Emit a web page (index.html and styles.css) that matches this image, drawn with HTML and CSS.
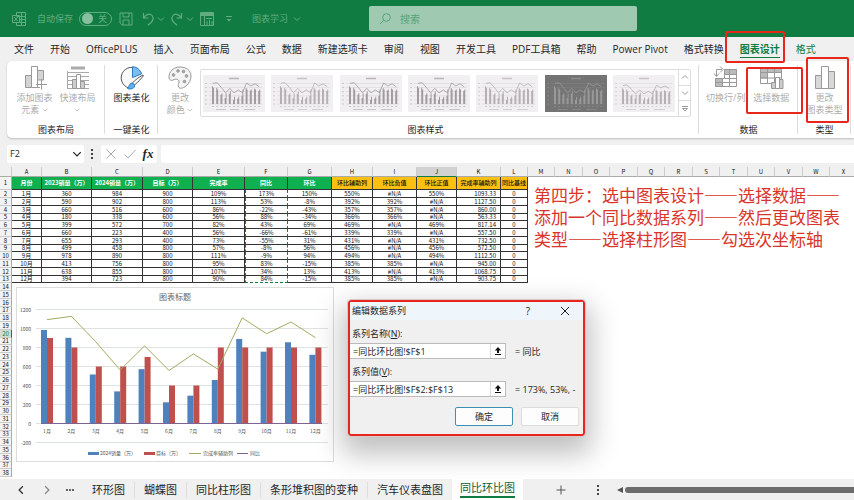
FILE: index.html
```html
<!DOCTYPE html>
<html lang="zh-CN">
<head>
<meta charset="utf-8">
<title>图表学习</title>
<link rel="stylesheet" href="styles.css">
</head>
<body>
<svg class="defs" aria-hidden="true">
  <symbol id="chev" viewBox="0 0 8 8"><path d="M1 2.5 4 5.5 7 2.5" fill="none" stroke="currentColor"/></symbol>
  <symbol id="pick" viewBox="0 0 10 10"><path d="M5 1 1.8 4.4H4V7H6V4.4H8.2ZM2 8H8V9H2Z" fill="currentColor"/></symbol>
</svg>

<header class="titlebar">
  <svg class="ic14 excel" viewBox="0 0 14 14"><g fill="none" stroke="currentColor"><path d="M4.5 3.5V.5H13.5V13.5H4.5V10.500M9.500 .5V13.5M4.5 4.500H13.500M8 7.500H13.500M8 10.500H13.500"/><path d="M.5 3.500H7.500V10.500H.5ZM2.300 5 5.700 9M5.700 5 2.300 9"/></g></svg>
  <span class="autosave">自动保存</span>
  <button class="toggle" aria-label="自动保存"><i></i>关</button>
  <button class="tool save" aria-label="保存"><svg class="ic14" viewBox="0 0 14 14"><path d="M1 1H13V13H3L1 11ZM4 1V5H10V1M4 13V8H10V13" fill="none" stroke="currentColor"/></svg></button>
  <button class="tool undo" aria-label="撤销"><svg class="ic14" viewBox="0 0 14 14"><path d="M2.500 1V6H7.500M2.500 6C5 2 9 1 11 3.500 13 6 12 8.500 10 10.500L7 13.300" fill="none" stroke="currentColor" stroke-width="1.200"/></svg><svg class="ic8"><use href="#chev"/></svg></button>
  <button class="tool redo" aria-label="恢复"><svg class="ic14" viewBox="0 0 14 14"><path d="M11.500 1V6H6.500M11.500 6C9 2 5 1 3 3.500 1 6 2 8.500 4 10.500L7 13.300" fill="none" stroke="currentColor" stroke-width="1.200"/></svg><svg class="ic8"><use href="#chev"/></svg></button>
  <button class="tool grid" aria-label="表格"><svg class="ic14" viewBox="0 0 14 14"><path d="M.5 .5H13.500V13.500H.5ZM.5 3.500H13.500M4.500 3.500V13.500M6 6.500H12M7 9V13M9.500 8V13M12 9V13" fill="none" stroke="currentColor"/><path d="M1 1H13V3H1Z" fill="currentColor"/></svg></button>
  <button class="tool more" aria-label="自定义"><svg class="ic8" viewBox="0 0 8 8"><path d="M1 1.500H7" stroke="currentColor"/><path d="M1.500 4H6.500L4 6.500Z" fill="currentColor"/></svg></button>
  <button class="doc">图表学习<svg class="ic8"><use href="#chev"/></svg></button>
  <label class="search"><svg class="ic12" viewBox="0 0 12 12"><circle cx="7.500" cy="4.500" r="3.800" fill="none" stroke="currentColor"/><path d="M4.800 7.200 1 11" stroke="currentColor"/></svg><input type="text" placeholder="搜索" aria-label="搜索"></label>
</header>

<nav class="tabs">
  <a href="#">文件</a><a href="#">开始</a><a href="#">OfficePLUS</a><a href="#">插入</a><a href="#">页面布局</a><a href="#">公式</a><a href="#">数据</a><a href="#">新建选项卡</a><a href="#">审阅</a><a href="#">视图</a><a href="#">开发工具</a><a href="#">PDF工具箱</a><a href="#">帮助</a><a href="#">Power Pivot</a><a href="#">格式转换</a><a href="#" class="current marked">图表设计</a><a href="#" class="context">格式</a>
</nav>

<section class="ribbon">
  <div class="group">
    <div class="items">
      <button class="cmd"><svg class="ic24" viewBox="0 0 24 24"><g fill="#d4d4d4" stroke="#999"><path d="M2.500 9.500H8.500V21.500H2.500Z"/><path d="M14.500 4.500H20.500V14H14.500Z"/><path fill="#fff" d="M8.500 .5H14.500V21.500H8.500Z"/><path fill="none" d="M14.500 21.500H17M18.500 13V23.500M13 18.500H24"/></g></svg><span>添加图表<br>元素 <svg class="ic6"><use href="#chev"/></svg></span></button>
      <button class="cmd"><svg class="ic24" viewBox="0 0 24 24"><path d="M5 .5H19V3.500H5Z" fill="#aaa"/><path d="M1.500 5V22.500M1 6.500H23M1 10.500H23M1 14.500H23M1 18.500H23M1 22.500H23" stroke="#aaa" fill="none"/><g fill="#ccc" stroke="#999"><path d="M6.500 13.500H10.500V22.500H6.500ZM14.500 15.500H18.500V22.500H14.500Z"/><path fill="#fff" d="M10.500 8.500H14.500V22.500H10.500Z"/></g></svg><span>快速布局<br><svg class="ic6"><use href="#chev"/></svg></span></button>
    </div>
    <h2>图表布局</h2>
  </div>
  <div class="group single">
    <div class="items">
      <button class="cmd on"><svg class="ic24" viewBox="0 0 24 24"><path d="M21 7A10.500 10.500 0 1 0 9 22" fill="#fafafa" stroke="#555"/><path d="M12.500 .8V11.500L21.500 8C20.500 4 17 .8 12.500 .8Z" fill="#7cbcf0" stroke="#2b7cc4"/><path d="M23 9C19 11 15 14 12.500 17L14.500 19C18 16 22 12 23.500 9.500Z" fill="#fff" stroke="#555"/><path d="M12 17C9.500 17 9.500 20 7.500 22.500 11 24 15.500 22 14.500 19Z" fill="#5fb0ee" stroke="#2b7cc4"/></svg><span>图表美化</span></button>
    </div>
    <h2>一键美化</h2>
  </div>
  <div class="group styles">
    <div class="items">
      <button class="cmd narrow"><svg class="ic24" viewBox="0 0 24 24"><path d="M12 1C5 1 1 6 1 11 1 14 3 15 5 14 8 12.500 11 13 11 16 11 18 9.500 19 10.500 21 11.500 23 15 22.500 18 20 21 17.500 23 14 23 10 23 4 17.500 1 12 1Z" fill="#f4f4f4" stroke="#999"/><g fill="#aaa" stroke="#888" stroke-width=".6"><circle cx="5.500" cy="9" r="1.400"/><circle cx="10" cy="5" r="1.400"/><circle cx="15.500" cy="5.500" r="1.400"/><circle cx="18.500" cy="10" r="1.400"/><circle cx="16.500" cy="15.500" r="1.400"/></g></svg><span>更改<br>颜色 <svg class="ic6"><use href="#chev"/></svg></span></button>
      <div class="gallery">
        <div class="thumbs" id="thumbs"></div>
        <div class="scroller"><button aria-label="上"><svg class="ic8 flip"><use href="#chev"/></svg></button><button aria-label="下"><svg class="ic8"><use href="#chev"/></svg></button><button aria-label="更多"><svg class="ic8" viewBox="0 0 8 8"><path d="M1 1.500H7M1.500 3.500H6.500L4 6Z" fill="none" stroke="currentColor"/></svg></button></div>
      </div>
    </div>
    <h2>图表样式</h2>
  </div>
  <div class="group data">
    <div class="items">
      <button class="cmd"><svg class="ic24" viewBox="0 0 24 24"><g fill="#fff" stroke="#999"><path d="M10.500 3.500H22.500V20.500H1.500V12.500H10.500Z"/><path fill="#bbb" d="M10.500 3.500H22.500V8.500H10.500ZM1.500 12.500H8.500V20.500H1.500Z"/><path fill="none" d="M1.500 16.500H22.500M8.500 12.500V20.500M15.500 3.500V20.500M10.500 12.500H22.500"/><path fill="none" d="M2.500 10V3.500H8M6 .5 9 3.500 6 6.500M0 7.500 2.500 10.500 5 7.500"/></g></svg><span>切换行/列</span></button>
      <button class="cmd marked"><svg class="ic24" viewBox="0 0 24 24"><g fill="#fff" stroke="#999"><path d="M1.500 1.500H22.500V17.500H1.500Z"/><path fill="#bbb" d="M1.500 1.500H22.500V6.500H1.500ZM1.500 6.500H8.500V12H1.500Z"/><path fill="none" d="M1.500 12H22.500M8.500 1.500V17.500M15.500 1.500V17.500"/><path fill="#ccc" d="M12.500 16.500H16.500V22.500H12.500ZM20.500 13.500H24V22.500H20.500Z"/><path d="M16.500 11.500H20.500V22.500H16.500Z"/></g></svg><span>选择数据</span></button>
    </div>
    <h2>数据</h2>
  </div>
  <div class="group single">
    <div class="items">
      <button class="cmd marked"><svg class="ic24" viewBox="0 0 24 24"><g stroke="#999"><path fill="#d8d8d8" d="M2.500 9.500H8.500V22.500H2.500ZM15.500 5.500H21.500V22.500H15.500Z"/><path fill="#fff" d="M8.500 .5H15.500V22.500H8.500Z"/></g></svg><span>更改<br>图表类型</span></button>
    </div>
    <h2>类型</h2>
  </div>
</section>

<div class="formula">
  <label class="namebox"><input type="text" value="F2" aria-label="名称框"><svg class="ic10"><use href="#chev"/></svg></label>
  <span class="dots"><i></i><i></i><i></i></span>
  <div class="fx">
    <button aria-label="取消输入"><svg class="ic12" viewBox="0 0 12 12"><path d="M1.500 1.500 10.500 10.500M10.500 1.500 1.500 10.500" stroke="#aaa"/></svg></button>
    <button aria-label="输入"><svg class="ic12" viewBox="0 0 12 12"><path d="M.5 6.500 4 10 11.500 2" fill="none" stroke="#aaa"/></svg></button>
    <button class="fn" aria-label="插入函数">fx</button>
  </div>
  <input class="expr" type="text" aria-label="编辑栏">
</div>

<main class="sheet">
  <table class="cells">
    <colgroup id="cols"></colgroup>
    <thead><tr id="letters"></tr></thead>
    <tbody id="rows"></tbody>
  </table>

  <figure class="chart"><svg id="chart" viewBox="0 0 316 173"></svg></figure>

  <p class="note">第四步：选中图表设计——选择数据——<br>添加一个同比数据系列——然后更改图表<br>类型——选择柱形图——勾选次坐标轴</p>

  <form class="dialog" role="dialog" aria-label="编辑数据系列">
    <div class="caption"><span>编辑数据系列</span><button type="button">?</button><button type="button" aria-label="关闭"><svg class="ic8" viewBox="0 0 8 8"><path d="M0 0 8 8M8 0 0 8" stroke="#222"/></svg></button></div>
    <div class="fields">
      <label for="sname">系列名称(<u>N</u>):</label>
      <div class="line"><div class="ref"><input id="sname" type="text" value="=同比环比图!$F$1"><button type="button" aria-label="选择区域"><svg class="ic10"><use href="#pick"/></svg></button></div><output>= 同比</output></div>
      <label for="svals">系列值(<u>V</u>):</label>
      <div class="line"><div class="ref"><input id="svals" type="text" value="=同比环比图!$F$2:$F$13"><button type="button" aria-label="选择区域"><svg class="ic10"><use href="#pick"/></svg></button></div><output>= 173%, 53%, -</output></div>
    </div>
    <div class="actions"><button type="button" class="primary">确定</button><button type="button">取消</button></div>
  </form>
</main>

<footer class="sheetbar">
  <button class="nav" aria-label="上一个"><svg class="ic10 left"><use href="#chev"/></svg></button>
  <button class="nav dim" aria-label="下一个"><svg class="ic10 right"><use href="#chev"/></svg></button>
  <button class="nav all" aria-label="全部"><i></i><i></i><i></i></button>
  <a href="#">环形图</a><a href="#">蝴蝶图</a><a href="#">同比柱形图</a><a href="#">条形堆积图的变种</a><a href="#">汽车仪表盘图</a><a href="#" class="current"><span>同比环比图</span></a>
  <button class="add" aria-label="新建工作表"><svg class="ic10" viewBox="0 0 10 10"><path d="M5 .5V9.500M.5 5H9.500" stroke="#555"/></svg></button>
  <span class="dots"><i></i><i></i><i></i></span>
  <svg class="ic6 arrow" viewBox="0 0 6 6"><path d="M6 0V6L0 3Z" fill="#555"/></svg>
  <div class="scrollbar"></div>
</footer>
<script src="app.js"></script>
</body>
</html>
```
FILE: styles.css
```css
* { box-sizing: border-box; }
body {
  margin: 0; height: 100vh; overflow: hidden;
  display: flex; flex-direction: column;
  background: #f0f0f0; color: #262626;
  font: 9px/12px "Open Sans", "Noto Sans CJK SC", sans-serif;
}
button, input { font: inherit; color: inherit; border: 0; background: none; padding: 0; margin: 0; min-width: 0; }
a { color: inherit; text-decoration: none; }
svg { display: block; flex: none; overflow: visible; }
.defs { position: absolute; width: 0; height: 0; }
.ic6 { width: 6px; height: 6px; }
.ic8 { width: 8px; height: 8px; }
.ic10 { width: 10px; height: 10px; }
.ic12 { width: 12px; height: 12px; }
.ic14 { width: 14px; height: 14px; }
.ic24 { width: 24px; height: 24px; }
.flip { transform: rotate(180deg); }
.left { transform: rotate(90deg); }
.right { transform: rotate(-90deg); }

.titlebar { flex: none; height: 37px; display: flex; align-items: center; padding-left: 12px; background: #107c41; color: #62ac82; }
.autosave { margin: 0 6px 0 11px; }
.toggle { width: 33px; height: 14px; border: 1px solid #62ac82; border-radius: 7px; display: flex; align-items: center; gap: 5px; padding-left: 2px; }
.toggle i { width: 11px; height: 11px; border-radius: 50%; background: #86c09f; }
.tool { display: flex; align-items: center; gap: 2px; }
.save { margin-left: 7px; }
.undo { margin-left: 8px; }
.redo { margin-left: 5px; }
.grid { margin-left: 6px; }
.more { margin-left: 11px; }
.doc { display: flex; align-items: center; gap: 5px; margin-left: 19px; }
.search { display: flex; align-items: center; gap: 9px; width: 268px; height: 25px; margin-left: 68px; padding-left: 10px; border-radius: 2px; background: #a0c9b2; color: #56a378; }
.search input { flex: 1; font-size: 10px; }
.search input::placeholder { color: #56a378; opacity: 1; }

.tabs { flex: none; height: 24px; max-width: 816px; padding-left: 14px; display: flex; justify-content: space-between; align-items: center; font-size: 10px; line-height: 16px; white-space: nowrap; }
.tabs .current { color: #107c41; font-weight: bold; border-bottom: 1px solid #107c41; }
.tabs .context { color: #107c41; }

.marked { position: relative; }
.marked::after { content: ""; position: absolute; z-index: 2; border: 2px solid #e8261c; border-radius: 2px; pointer-events: none; }
.tabs .marked::after { inset: -10px -5px -6px -15px; }
.data .marked::after { inset: 1px -9px 2px -3px; }
.single .marked::after { inset: -9px 2px -7px 8px; }

.ribbon { flex: none; height: 77px; margin-left: 7px; display: flex; background: #fff; border-radius: 5px 0 0 5px; box-shadow: 0 1px 2px #bbb; }
.group { position: relative; display: flex; flex-direction: column; justify-content: space-between; width: 98px; padding: 5px 6px 2px; }
.group::before { content: ""; position: absolute; right: 0; top: 4px; bottom: 4px; border-right: 1px solid #ddd; }
.group.single { width: 53px; padding-left: 0; padding-right: 0; }
.group.styles { flex: 1; padding-left: 2px; padding-right: 8px; }
.group.data { width: 99px; padding-left: 4px; padding-right: 4px; }
.group:last-child { margin-right: 3px; }
.group h2 { margin: 0; font-size: 9px; font-weight: normal; line-height: 12px; text-align: center; }
.items { display: flex; justify-content: center; align-items: flex-start; }
.cmd { flex: 1; display: flex; flex-direction: column; align-items: center; gap: 2px; height: 50px; color: #acacac; white-space: nowrap; }
.cmd.narrow { flex: none; width: 40px; }
.cmd span svg { display: inline-block; }
.cmd.on { color: #262626; }
.gallery { flex: 1; min-width: 0; height: 48px; margin-top: 3px; display: flex; border: 1px solid #ddd; border-radius: 2px; }
.thumbs { flex: 1; display: flex; justify-content: space-between; align-items: center; padding: 0 3px 0 2px; }
.thumb { width: 62px; height: 37px; background: #f2eff2; color: #a09ca0; }
.thumb.pale { color: #b4b0b4; }
.thumb.dark { background: #747474; color: #999; }
.scroller { width: 12px; display: flex; flex-direction: column; border-left: 1px solid #ddd; color: #999; }
.scroller button { flex: 1; display: grid; place-items: center; }
.scroller button + button { border-top: 1px solid #ddd; }

.formula { flex: none; height: 18px; margin: 7px 0 4px 7px; display: flex; }
.namebox { width: 77px; padding: 0 2px 0 3px; display: flex; align-items: center; background: #fff; border-radius: 2px; }
.namebox input { flex: 1; }
.dots { display: flex; flex-direction: column; justify-content: center; gap: 2px; width: 2px; margin: 0 8px 0 7px; }
.dots i { width: 2px; height: 2px; background: #444; }
.fx { width: 56px; margin-right: 4px; display: flex; align-items: center; justify-content: space-around; background: #fff; border-radius: 2px; }
.fn { font: italic bold 13px/16px "Liberation Serif", serif; }
.expr { flex: 1; background: #fff; border-radius: 2px 0 0 2px; }

.sheet { position: relative; flex: 1; min-height: 0; overflow: hidden; background: #fff; }
.cells { width: 100%; table-layout: fixed; border-spacing: 0; font: 6px/6px "Noto Sans CJK SC", sans-serif; text-align: center; color: #111; }
.cells th, .cells td { padding: 0; white-space: nowrap; }
.cells thead th { height: 10px; background: #f0f0f0; border-right: 1px solid #ccc; border-bottom: 1px solid #aaa; font-weight: normal; }
.cells thead .sel { background: #d2d2d2; border-bottom-color: #107c41; }
.cells tbody tr { height: 8px; }
.cells tbody tr:nth-child(4n+1) { height: 7px; }
.cells tbody tr:first-child { height: 13px; }
.cells tbody th { background: #f3f3f3; border-right: 1px solid #aaa; border-bottom: 1px solid #ccc; font-weight: normal; }
.cells tbody .sel { background: #d0ddd5; color: #107c41; border-right-color: #107c41; }
.cells .v { border-right: 1px solid #333; border-bottom: 1px solid #333; }
.cells .num { text-align: right; padding-right: 4px; }
.cells .green { background: #0fb050; color: #fff; font-weight: bold; }
.cells .amber { background: #fdc010; font-weight: 500; }
.cells .ants { border-right: 1px dashed #107c41; border-left: 1px dashed #107c41; }
.cells .ants.last { border-bottom: 1px dashed #107c41; }
.c12 { width: 12px; } .c27 { width: 27px; } .c28 { width: 28px; } .c30 { width: 30px; } .c40 { width: 40px; } .c41 { width: 41px; }
.c43 { width: 43px; } .c44 { width: 44px; } .c50 { width: 50px; } .c51 { width: 51px; } .c52 { width: 52px; }

.chart { position: absolute; left: 16px; top: 120px; width: 318px; margin: 0; border: 1px solid #ddd; background: #fff; }
.chart text { font: 5px "Noto Sans CJK SC", sans-serif; fill: #555; }
.chart .title { font-size: 8px; fill: #666; }
.note { position: absolute; left: 534px; top: 17px; margin: 0; font-size: 17px; line-height: 22px; color: #d9362b; white-space: nowrap; font-family: "Noto Sans CJK SC", sans-serif; }

.dialog { position: absolute; left: 348px; top: 133px; width: 237px; background: #f0f0f0; border: 2px solid #e8261c; border-radius: 3px; outline: 1px solid #d8c8c8; box-shadow: 0 12px 28px 6px rgba(0,0,0,.25); }
.caption { height: 18px; display: flex; align-items: center; padding: 0 14px 0 2px; background: #eef5fb; }
.caption span { flex: 1; }
.caption button { margin-left: 31px; font-size: 10px; }
.fields { display: flex; flex-direction: column; padding-top: 6px; line-height: 15px; }
.fields label { padding-left: 2px; }
.line { display: flex; align-items: center; gap: 9px; margin: 2px 0 5px; white-space: nowrap; overflow: hidden; }
.ref { flex: none; width: 156px; height: 16px; display: flex; background: #fff; border: 1px solid #bbb; border-left: 0; }
.ref input { flex: 1; padding-left: 3px; }
.ref button { width: 15px; display: grid; place-items: center; border-left: 1px solid #ddd; color: #111; }
.actions { display: flex; justify-content: flex-end; gap: 8px; padding: 5px 4px 8px; }
.actions button { width: 58px; height: 19px; background: #fdfdfd; border: 1px solid #ddd; border-radius: 2px; }
.actions .primary { border-color: #3f8fb5; }

.sheetbar { flex: none; height: 21px; display: flex; align-items: center; font-size: 11px; line-height: 16px; white-space: nowrap; padding-left: 16px; }
.nav { margin-right: 16px; color: #333; }
.nav.dim { color: #888; }
.nav.all { display: flex; gap: 1px; margin-right: 9px; margin-left: -2px; }
.nav.all i { width: 2px; height: 2px; border-radius: 50%; background: #333; }
.sheetbar a { padding: 0 9px; border-right: 1px solid #ddd; }
.sheetbar a:nth-of-type(5) { border-right: 0; }
.sheetbar .current { align-self: stretch; padding: 0 8px; background: #fff; border: 0; }
.sheetbar .current span { display: block; line-height: 18px; border-bottom: 2px solid #107c41; height: 19px; color: #0c5c31; }
.add { margin: 0 24px 0 33px; }
.arrow { margin: 0 2px 0 10px; }
.scrollbar { flex: 1; height: 6px; border-radius: 3px 0 0 3px; background: #6d6d6d; }
```
FILE: app.js
```js
const head = ['月份', '2023销量（万）', '2024销量（万）', '目标（万）', '完成率', '同比', '环比', '环比辅助列', '环比负值', '环比正值', '完成率辅助列', '同比基线'];
const data = [
  ['1月', 360, 984, 900, '109%', '173%', '150%', '550%', '#N/A', '550%', '1093.33', 0],
  ['2月', 590, 902, 800, '113%', '53%', '-8%', '392%', '392%', '#N/A', '1127.50', 0],
  ['3月', 660, 516, 600, '86%', '-22%', '-43%', '357%', '357%', '#N/A', '860.00', 0],
  ['4月', 180, 338, 600, '56%', '88%', '-34%', '366%', '366%', '#N/A', '563.33', 0],
  ['5月', 399, 572, 700, '82%', '43%', '69%', '469%', '#N/A', '469%', '817.14', 0],
  ['6月', 660, 223, 400, '56%', '-66%', '-61%', '339%', '339%', '#N/A', '557.50', 0],
  ['7月', 655, 293, 400, '73%', '-55%', '31%', '431%', '#N/A', '431%', '732.50', 0],
  ['8月', 499, 458, 800, '57%', '-8%', '56%', '456%', '#N/A', '456%', '572.50', 0],
  ['9月', 978, 890, 800, '111%', '-9%', '94%', '494%', '#N/A', '494%', '1112.50', 0],
  ['10月', 413, 756, 800, '95%', '83%', '-15%', '385%', '385%', '#N/A', '945.00', 0],
  ['11月', 638, 855, 800, '107%', '34%', '13%', '413%', '#N/A', '413%', '1068.75', 0],
  ['12月', 394, 723, 800, '90%', '84%', '-15%', '385%', '385%', '#N/A', '903.75', 0]
];
const el = id => document.getElementById(id);
const widths = [12, 30, 50, 51, 50, 52, 43, 44, 41, 44, 40, 44, 27];
for (let i = 0; i < 12; i++) widths.push(i % 2 ? 28 : 27);
el('cols').innerHTML = widths.map(w => `<col class="c${w}">`).join('');
el('letters').innerHTML = '<th></th>' + [...'ABCDEFGHIJKLMNOPQRSTUVWX'].map(c => `<th${c === 'J' ? ' class="sel"' : ''}>${c}</th>`).join('');

let rows = '';
for (let r = 1; r <= 38; r++) {
  rows += `<tr><th${r === 20 ? ' class="sel"' : ''}>${r}</th>`;
  if (r === 1) rows += head.map((t, i) => `<td class="v ${i < 7 ? 'green' : 'amber'}">${t}</td>`).join('');
  else if (r <= 13) rows += data[r - 2].map((t, i) => `<td class="v${i === 10 ? ' num' : ''}${i === 5 ? ' ants' : ''}${i === 5 && r === 13 ? ' last' : ''}">${t}</td>`).join('');
  rows += '</tr>';
}
el('rows').innerHTML = rows;

const y = v => 135.5 - v * 0.095;
const x = i => 30 + i * 24.4;
let g = '<text class="title" x="158" y="12" text-anchor="middle">图表标题</text>';
for (let v = -200; v <= 1200; v += 200) {
  g += `<path d="M19 ${y(v)}H311" stroke="#dce3e3"/><text x="14" y="${y(v) + 2}" text-anchor="end">${v}</text>`;
}
data.forEach((d, i) => {
  g += `<path d="M${x(i) - 6} ${y(0)}V${y(d[2])}h6V${y(0)}z" fill="#4f81bd"/><path d="M${x(i)} ${y(0)}V${y(d[3])}h6V${y(0)}z" fill="#c0504d"/>`;
  g += `<text x="${x(i)}" y="145" text-anchor="middle">${d[0]}</text>`;
});
g += `<polyline points="${data.map((d, i) => x(i) + ',' + y(d[10])).join(' ')}" fill="none" stroke="#a0ac62"/>`;
g += `<path d="M24 ${y(0)}H305" stroke="#7d6492"/>`;
g += '<path d="M71 164H82V167H71Z" fill="#4f81bd"/><path d="M127 164H138V167H127Z" fill="#c0504d"/><path d="M172 165.500H184" stroke="#a0ac62"/><path d="M220 165.500H231" stroke="#7d6492"/>';
g += '<text x="83" y="167">2024销量（万）</text><text x="139" y="167">目标（万）</text><text x="186" y="167">完成率辅助列</text><text x="233" y="167">同比</text>';
el('chart').innerHTML = g;

const kinds = ['', 'pale', '', '', 'pale', 'dark', 'pale'];
el('thumbs').innerHTML = kinds.map((k, n) => {
  const bx = i => 10 + i * 4.2;
  const top = n === 6 ? 2 : 0;
  const sy = v => 29 - v * (0.018 - top * 0.001);
  let s = `<path d="M26 3.5H36" stroke="currentColor" stroke-width="1.500" opacity=".7"/>`;
  for (let v = 0; v < 6; v++) s += `<path d="M6 ${8.5 + v * 4.1}H59" stroke="currentColor" stroke-width=".5" opacity=".4"/><path d="M2 ${8.5 + v * 4.1}h2" stroke="currentColor" opacity=".5"/>`;
  data.forEach((d, i) => { s += `<path d="M${bx(i) - 1} 29V${sy(d[2])}h1V29zM${bx(i)} 29V${sy(d[3])}h1V29z" fill="currentColor"/><path d="M${bx(i) - 1} 31.5h2" stroke="currentColor" opacity=".5"/>`; });
  s += `<polyline points="${data.map((d, i) => bx(i) + ',' + (sy(d[10]) - 1)).join(' ')}" fill="none" stroke="currentColor" stroke-width=".8"/>`;
  s += `<path d="M13 34.500H23M27 34.500H36M41 34.500H52" stroke="currentColor" opacity=".5"/>`;
  return `<svg class="thumb ${k}" viewBox="0 0 62 37">${s}</svg>`;
}).join('');
```
